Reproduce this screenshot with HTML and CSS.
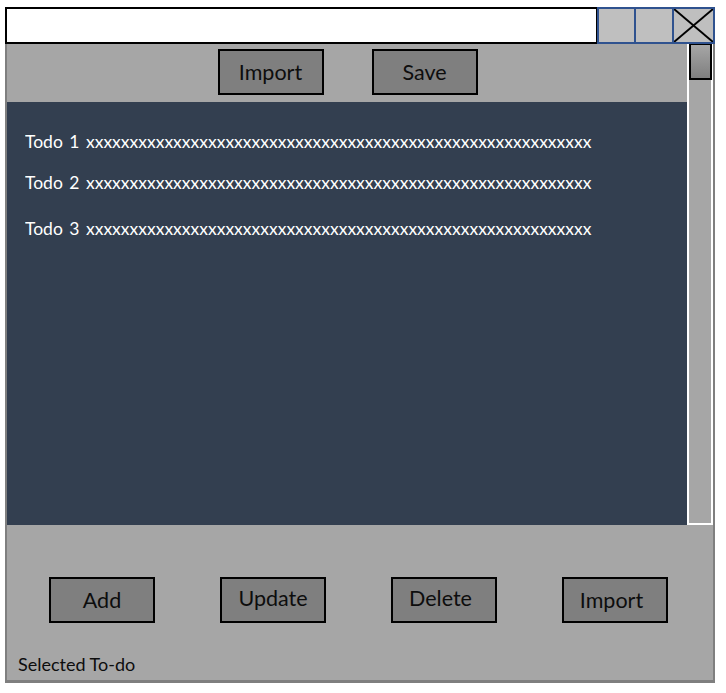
FILE: index.html
```html
<!DOCTYPE html>
<html lang="en">
<head>
<meta charset="utf-8">
<title>Todo</title>
<link rel="stylesheet" href="styles.css">
</head>
<body>
<div class="window">
  <div class="titlebar">
    <div class="title-field"></div>
    <div class="tb-btn tb-first"></div>
    <div class="tb-btn"></div>
    <div class="tb-btn tb-close">
      <svg class="close-x" viewBox="0 0 38 35" preserveAspectRatio="none">
        <line x1="0" y1="0" x2="38" y2="35" />
        <line x1="38" y1="0" x2="0" y2="35" />
      </svg>
    </div>
  </div>
  <div class="panel">
    <div class="upper">
      <div class="main">
        <div class="toolbar">
          <button class="btn">Import</button>
          <button class="btn">Save</button>
        </div>
        <div class="list">
          <div class="todo">Todo 1 xxxxxxxxxxxxxxxxxxxxxxxxxxxxxxxxxxxxxxxxxxxxxxxxxxxxxxxxxx</div>
          <div class="todo todo-2">Todo 2 xxxxxxxxxxxxxxxxxxxxxxxxxxxxxxxxxxxxxxxxxxxxxxxxxxxxxxxxxx</div>
          <div class="todo todo-3">Todo 3 xxxxxxxxxxxxxxxxxxxxxxxxxxxxxxxxxxxxxxxxxxxxxxxxxxxxxxxxxx</div>
        </div>
      </div>
      <div class="scrollbar">
        <div class="thumb"></div>
      </div>
    </div>
    <div class="bottom">
      <div class="actions">
        <button class="btn">Add</button>
        <button class="btn btn-high">Update</button>
        <button class="btn btn-high btn-shift">Delete</button>
        <button class="btn btn-shift">Import</button>
      </div>
      <div class="status">Selected To-do</div>
    </div>
  </div>
</div>
</body>
</html>
```
FILE: styles.css
```css
html, body {
  margin: 0;
  padding: 0;
  background: #ffffff;
}

body {
  font-family: Lato, "Open Sans", sans-serif;
}

.window {
  margin: 7px 0 0 5px;
  width: 710px;
}

.titlebar {
  display: flex;
  height: 37px;
  width: 709px;
}

.title-field {
  width: 589px;
  border: 2px solid #000;
  background: #fff;
  flex: none;
}

.tb-btn {
  width: 36px;
  border: 2px solid #2f528f;
  border-left: none;
  background: #bfbfbf;
  flex: none;
}

.tb-first {
  border-left: 2px solid #2f528f;
  margin-left: -1px;
  width: 35px;
}

.tb-close {
  width: 39px;
}

.close-x {
  display: block;
  width: 100%;
  height: 100%;
}

.close-x line {
  stroke: #000;
  stroke-width: 2;
}

.panel {
  background: #a6a6a6;
  border-left: 2px solid #7f7f7f;
  border-right: 2px solid #7f7f7f;
  border-bottom: 3px solid #7f7f7f;
}

.upper {
  display: flex;
  margin-right: -1px;
}

.main {
  width: 681px;
  flex: none;
}

.toolbar {
  display: flex;
  justify-content: center;
  gap: 48px;
  padding: 5px 0 7px;
}

.btn {
  width: 106px;
  height: 46px;
  border: 2px solid #000;
  background: #7f7f7f;
  color: #0d0d0d;
  font-family: Lato, "Open Sans", sans-serif;
  font-size: 21.5px;
  padding: 0;
  margin: 0;
}

.btn-high {
  padding-bottom: 4px;
}

.btn-shift {
  padding-right: 7px;
}

.list {
  background: #333f50;
  height: 423px;
  box-sizing: border-box;
  padding: 28px 0 0 18px;
  color: #ffffff;
  font-size: 17.5px;
}

.todo {
  line-height: 24px;
  white-space: nowrap;
  overflow: hidden;
  word-spacing: 2px;
}

.todo-2 {
  margin-top: 17px;
}

.todo-3 {
  margin-top: 22px;
}

.scrollbar {
  width: 22px;
  border: 2px solid #ffffff;
  border-top: none;
  background: #a6a6a6;
  margin-left: -1px;
}

.thumb {
  height: 33px;
  margin: 0 -1px 0 0;
  border: 2px solid #000;
  border-top-width: 1px;
  background: linear-gradient(#a6a6a6, #7f7f7f);
}

.bottom {
  padding: 52px 0 6px 0;
}

.actions {
  display: flex;
  gap: 65px;
  padding-left: 42px;
}

.status {
  margin: 31px 0 0 11px;
  line-height: 20px;
  font-size: 18px;
  color: #0d0d0d;
}
```
